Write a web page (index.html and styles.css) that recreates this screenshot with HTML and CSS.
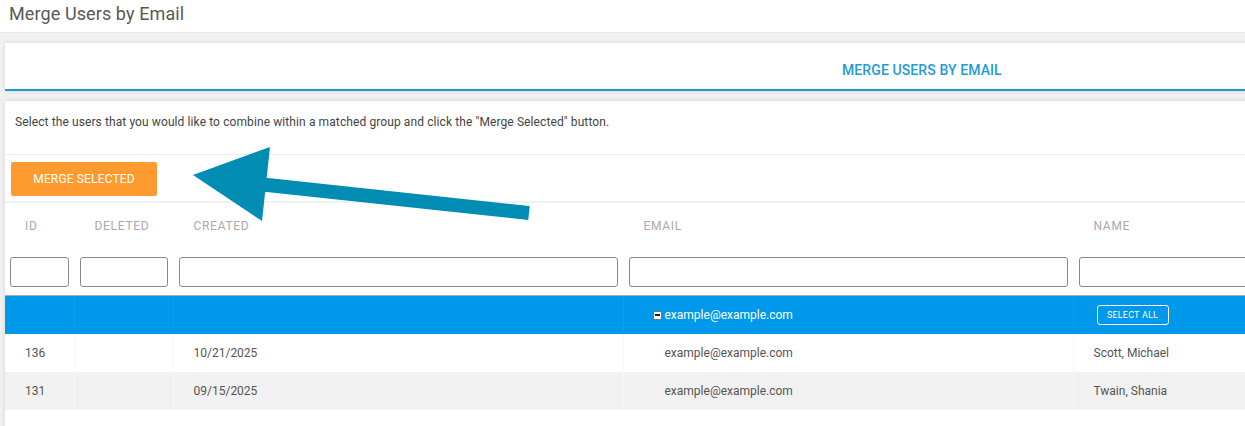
FILE: index.html
```html
<!DOCTYPE html>
<html>
<head>
<meta charset="utf-8">
<link rel="stylesheet" href="styles.css">
</head>
<body>
<header class="page-title">Merge Users by Email</header>
<main class="workspace">
  <nav class="tabs">
    <span class="tab">MERGE USERS BY EMAIL</span>
  </nav>
  <section class="panel">
    <p class="intro">Select the users that you would like to combine within a matched group and click the "Merge Selected" button.</p>
    <div class="toolbar">
      <button class="btn-merge">MERGE SELECTED</button>
    </div>
    <table class="grid">
      <colgroup>
        <col class="c-id"><col class="c-del"><col class="c-created"><col class="c-email"><col class="c-name">
      </colgroup>
      <thead>
        <tr class="labels">
          <th>ID</th><th>DELETED</th><th>CREATED</th><th>EMAIL</th><th>NAME</th>
        </tr>
        <tr class="filters">
          <th><input type="text"></th>
          <th><input type="text"></th>
          <th><input type="text"></th>
          <th><input type="text"></th>
          <th><input type="text"></th>
        </tr>
      </thead>
      <tbody>
        <tr class="group">
          <td></td><td></td><td></td>
          <td class="email"><span class="minus"></span>example@example.com</td>
          <td><span class="btn-all">SELECT ALL</span></td>
        </tr>
        <tr class="row">
          <td>136</td><td></td><td>10/21/2025</td><td class="email indent">example@example.com</td><td>Scott, Michael</td>
        </tr>
        <tr class="row alt">
          <td>131</td><td></td><td>09/15/2025</td><td class="email indent">example@example.com</td><td>Twain, Shania</td>
        </tr>
      </tbody>
    </table>
  </section>
</main>
<svg class="arrow" width="1245" height="426" viewBox="0 0 1245 426">
  <line x1="258" y1="184" x2="529" y2="213" stroke="#018db3" stroke-width="14"/>
  <polygon points="193,175 270,147 262,221" fill="#018db3"/>
</svg>
</body>
</html>
```
FILE: styles.css
```css
html, body {
  margin: 0;
  padding: 0;
  overflow: hidden;
  width: 1245px;
  height: 426px;
}
body {
  font-family: Roboto, "Liberation Sans", sans-serif;
  background: #ffffff;
  color: #555;
  position: relative;
}
.page-title {
  height: 33px;
  box-sizing: border-box;
  padding: 2px 0 0 9px;
  font-size: 18px;
  line-height: 24px;
  color: #585858;
  letter-spacing: 0.1px;
  border-bottom: 1px solid #e9e9e9;
}
.workspace {
  background: #f1f1f1;
  padding: 10px 0 0 5px;
  height: 400px;
  box-sizing: border-box;
}
.tabs {
  background: #fff;
  height: 48px;
  box-sizing: border-box;
  border-bottom: 2px solid #1e9ad9;
  box-shadow: 0 0 5px rgba(0,0,0,0.12);
  display: flex;
  align-items: center;
  width: 1400px;
}
.tab {
  margin-left: 837px;
  margin-top: 8px;
  font-size: 14px;
  font-weight: 500;
  letter-spacing: 0.1px;
  color: #1f9ad8;
}
.panel {
  margin-top: 10px;
  background: #fff;
  width: 1400px;
  height: 330px;
  box-shadow: 0 0 5px rgba(0,0,0,0.12);
}
.intro {
  margin: 0;
  height: 54px;
  box-sizing: border-box;
  padding: 13px 10px 0 10px;
  font-size: 12px;
  line-height: 16px;
  letter-spacing: 0.1px;
  color: #444;
  border-bottom: 1px solid #e9eded;
}
.toolbar {
  height: 48px;
  box-sizing: border-box;
  padding: 7px 0 0 6px;
  border-bottom: 2px solid #eef2f2;
}
.btn-merge {
  width: 146px;
  height: 34px;
  border: none;
  border-radius: 2px;
  background: #ff9a2e;
  color: #fff;
  font-family: Roboto, "Liberation Sans", sans-serif;
  font-size: 12px;
  letter-spacing: 0.15px;
  padding: 0;
}
.grid {
  border-collapse: collapse;
  table-layout: fixed;
  width: 1368px;
}
.c-id { width: 69px; }
.c-del { width: 99px; }
.c-created { width: 450px; }
.c-email { width: 450px; }
.c-name { width: 300px; }
.grid th, .grid td {
  padding: 0;
  text-align: left;
  font-weight: 400;
}
.grid th + th {
  border-left: 1px solid transparent;
}
.grid td + td {
  border-left: 1px solid #f7f7f7;
}
.labels th {
  height: 45px;
  padding: 0 0 0 20px;
  font-size: 12px;
  color: #aaa;
  letter-spacing: 0.7px;
  vertical-align: middle;
}
.filters th {
  height: 47px;
  padding: 9px 5px 0 5px;
  box-sizing: border-box;
  vertical-align: top;
  border-bottom: 1px solid #aaa;
}
.filters input {
  width: 100%;
  height: 30px;
  box-sizing: border-box;
  border: 1px solid #888;
  border-radius: 3px;
  margin: 0;
  background: #fff;
}
.group td {
  background: #0098ea;
  height: 38px;
  color: #fff;
  font-size: 12px;
}
.group td + td {
  border-left-color: rgba(255,255,255,0.05);
}
.group td.email {
  padding-left: 29px;
}
.minus {
  display: inline-block;
  width: 9px;
  height: 9px;
  box-sizing: border-box;
  background: #fff;
  border: 1px solid #777;
  vertical-align: -1px;
  margin-right: 3px;
  position: relative;
}
.minus::after {
  content: "";
  position: absolute;
  left: 1px;
  right: 1px;
  top: 2.5px;
  height: 2px;
  background: #222;
}
.btn-all {
  display: inline-block;
  margin-left: 23px;
  width: 72px;
  height: 20px;
  box-sizing: border-box;
  border: 1px solid #fff;
  border-radius: 3px;
  font-size: 9px;
  line-height: 18px;
  text-align: center;
  letter-spacing: 0.2px;
}
.row td {
  height: 38px;
  font-size: 12px;
  color: #555;
  padding-left: 20px;
}
.row td.indent {
  padding-left: 41px;
}
.row.alt td {
  background: #f1f1f1;
}
.arrow {
  position: absolute;
  left: 0;
  top: 0;
  pointer-events: none;
}
```
